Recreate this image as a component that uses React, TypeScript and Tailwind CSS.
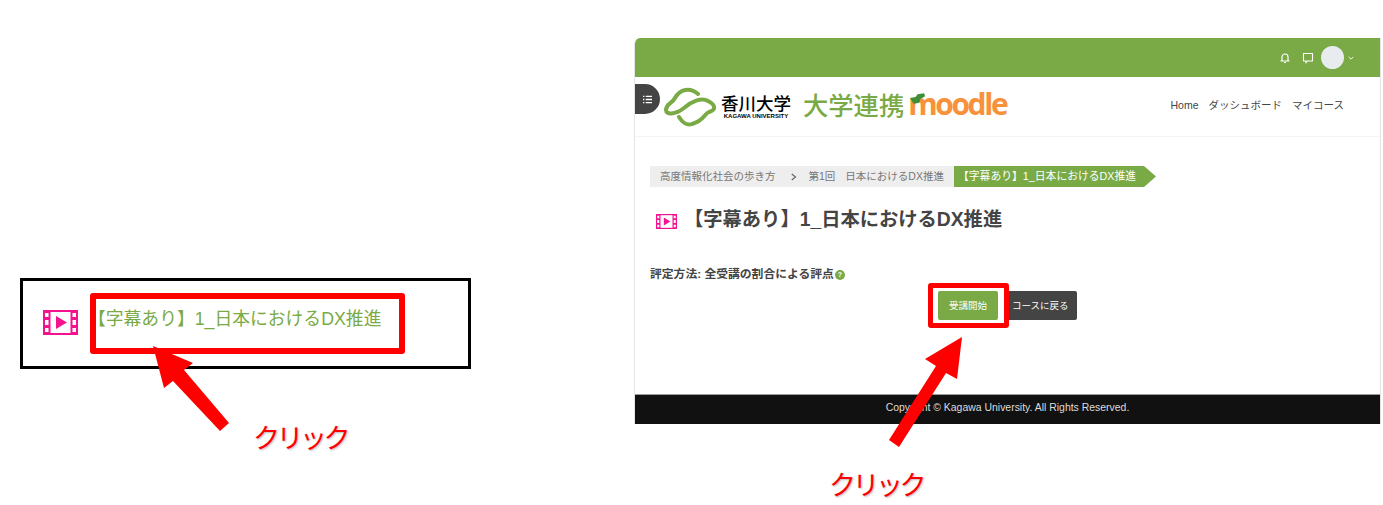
import React from "react";

const FONT = "font-['Liberation_Sans','Noto_Sans_CJK_JP',sans-serif]";

function Film({ className }: { className: string }) {
  return (
    <svg viewBox="0 0 35 25" className={className}>
      <rect width="35" height="25" fill="#f5128f" />
      <rect x="7.5" y="2" width="20" height="21" fill="white" />
      <path d="M2 3H5.5V7H2ZM2 10H5.5V15H2ZM2 18H5.5V22H2ZM29.5 3H33V7H29.5ZM29.5 10H33V15H29.5ZM29.5 18H33V22H29.5Z" fill="white" />
      <path d="M13 6L24 12.5L13 19Z" fill="#f5128f" />
    </svg>
  );
}

function Click({ className }: { className: string }) {
  return (
    <div className={`absolute text-[27px] leading-none tracking-[-3.5px] text-[#ff0000] font-['Noto_Sans_CJK_JP',sans-serif] [text-shadow:1px_1px_2px_#b9b9b9] ${className}`}>
      クリック
    </div>
  );
}

function Logo() {
  return (
    <div className="flex items-center">
      <svg viewBox="0 0 60 44" className="w-[60px] h-[44px] ml-[-1px] mt-[-3px]" fill="none" stroke="#7aaa45" strokeWidth="4" strokeLinecap="round">
        <path d="M38 11C30 4 20 6 15 15C12 21 6 20 6 27C6 32 15 32 24 25C32 18 42 14 48 18C56 22 56 27 49 29C44 31 44 38 32 41C27 43 22 39 19 34" />
      </svg>
      <div className="ml-[1px] flex flex-col items-center text-black">
        <span className="text-[17.5px] leading-[19px] font-medium">香川大学</span>
        <span className="text-[6px] leading-[5px] font-bold whitespace-nowrap">KAGAWA UNIVERSITY</span>
      </div>
      <span className="ml-[12px] text-[25.3px] leading-none font-medium text-[#7aaa45]">大学連携</span>
      <div className="relative ml-[4px] mt-[-2px]">
        <span className="text-[30px] leading-none font-bold tracking-[-2.4px] text-[#f7923a] font-['Open_Sans',sans-serif]">moodle</span>
        <svg viewBox="0 0 18 12" className="absolute left-[1px] top-[4px] w-[17px] h-[12px]">
          <path d="M1 5L7 4L9 1L16 0L17 3L12 6L11 10L5 11L3 8Z" fill="#3f8f3a" />
        </svg>
      </div>
    </div>
  );
}

function Panel() {
  return (
    <div className="w-[747px] h-[386px] flex flex-col border-l border-r border-[#e4e4e4] rounded-tl-[6px] overflow-hidden bg-white">
      <div className="h-[39px] shrink-0 bg-[#7aaa45] flex items-center justify-end pr-[26px] text-white">
        <svg viewBox="0 0 24 24" className="w-[12px] h-[12px]" fill="none" stroke="white" strokeWidth="2.4">
          <path d="M6 17V10a6 6 0 0 1 12 0v7l2 1H4Z" strokeLinejoin="round" />
          <path d="M10 21h4" />
        </svg>
        <svg viewBox="0 0 24 24" className="w-[12px] h-[12px] ml-[11px]" fill="none" stroke="white" strokeWidth="2.2">
          <path d="M3 3H21V18H10L8 22V18H3Z" strokeLinejoin="round" />
        </svg>
        <div className="w-[23px] h-[23px] rounded-full bg-[#e9ecef] ml-[7px]" />
        <svg viewBox="0 0 10 6" className="w-[6px] h-[4px] ml-[4px]" fill="none" stroke="white" strokeWidth="1.5">
          <path d="M1 1L5 5L9 1" />
        </svg>
      </div>
      <div className="relative h-[60px] shrink-0 border-b border-[#f4f4f4] flex items-center justify-between pl-[26px] pr-[36px]">
        <div className="absolute left-0 top-[7px] w-[25px] h-[30px] bg-[#444444] rounded-r-full flex items-center justify-center">
          <svg viewBox="0 0 12 10" className="w-[11px] h-[9px]" fill="none" stroke="white" strokeWidth="1.4">
            <path d="M4 1.5H11M4 5H11M4 8.5H11M1 1.5H2.5M1 5H2.5M1 8.5H2.5" />
          </svg>
        </div>
        <Logo />
        <nav className="flex gap-[10px] text-[10.5px] text-[#444444] mt-[-2px]">
          <span>Home</span>
          <span>ダッシュボード</span>
          <span>マイコース</span>
        </nav>
      </div>
      <div className="flex-1 flex flex-col pl-[15px] pt-[29px]">
        <div className="flex h-[21px] text-[10.5px] leading-[21px]">
          <div className="w-[304px] bg-[#eeeeee] text-[#777777] flex pl-[10px] shrink-0">
            <span>高度情報化社会の歩き方</span>
            <svg viewBox="0 0 8 10" className="w-[6px] h-[8px] ml-[15px] mt-[7px]" fill="none" stroke="#666666" strokeWidth="1.6">
              <path d="M1 1L6 5L1 9" />
            </svg>
            <span className="ml-[12px]">第1回</span>
            <span className="ml-[10px]">日本におけるDX推進</span>
          </div>
          <div className="w-[202px] pl-[4px] bg-[#7aaa45] text-white text-[10.8px] whitespace-nowrap shrink-0 [clip-path:polygon(0_0,190px_0,100%_50%,190px_100%,0_100%)]">
            【字幕あり】1_日本におけるDX推進
          </div>
        </div>
        <div className="flex items-center mt-[19px] h-[28px] pl-[6px]">
          <Film className="w-[21px] h-[15px] mt-[3px]" />
          <h1 className="ml-[7px] text-[19.3px] font-bold leading-none text-[#444444] whitespace-nowrap">【字幕あり】1_日本におけるDX推進</h1>
        </div>
        <div className="flex items-center mt-[33px] h-[16px] text-[11.8px] font-bold text-[#444444]">
          <span>評定方法: 全受講の割合による評点</span>
          <span className="ml-[1px] w-[10px] h-[10px] rounded-full bg-[#7aaa45] text-white text-[7px] leading-[10px] text-center">?</span>
        </div>
        <div className="flex mt-[8px] ml-[288px] h-[29px] text-[9.5px] leading-[29px] text-white">
          <div className="w-[60px] bg-[#7aaa45] rounded-[2px] text-center">受講開始</div>
          <div className="w-[73px] ml-[6px] pl-[8px] bg-[#444444] rounded-[2px]">コースに戻る</div>
        </div>
      </div>
      <div className="h-[30px] shrink-0 bg-[#111111] border-t border-[#9a9a9a] text-[10.45px] leading-[25px] text-[#dddddd] text-center">
        Copyright © Kagawa University. All Rights Reserved.
      </div>
    </div>
  );
}

export default function App() {
  return (
    <div className={`relative w-[1383px] h-[505px] overflow-hidden bg-white flex ${FONT}`}>
      <div className="w-[634px] shrink-0 pl-[20px] pt-[278px]">
        <div className="w-[451px] h-[91px] border-[3px] border-black flex items-start pl-[20px] pt-[29px]">
          <Film className="w-[35px] h-[25px]" />
          <span className="ml-[10px] mt-[-3px] text-[17.8px] leading-[24px] text-[#7aaa45] whitespace-nowrap">【字幕あり】1_日本におけるDX推進</span>
        </div>
      </div>
      <div className="pt-[38px]">
        <Panel />
      </div>
      <div className="absolute left-[90px] top-[293px] w-[315px] h-[61px] border-[6px] border-[#ff0000] rounded-[3px]" />
      <div className="absolute left-[928px] top-[283px] w-[81px] h-[45px] border-[5px] border-[#ff0000] rounded-[3px]" />
      <svg className="absolute left-0 top-0 w-[1383px] h-[505px] pointer-events-none" viewBox="0 0 1383 505">
        <polygon points="153,346 193,363 184,370 229,423 220,431 173,381 164,388" fill="#ff0000" />
        <polygon points="962,337 957,379 946,373 899,447 889,440 936,366 925,359" fill="#ff0000" />
      </svg>
      <Click className="left-[253px] top-[423px]" />
      <Click className="left-[829px] top-[470px]" />
    </div>
  );
}
